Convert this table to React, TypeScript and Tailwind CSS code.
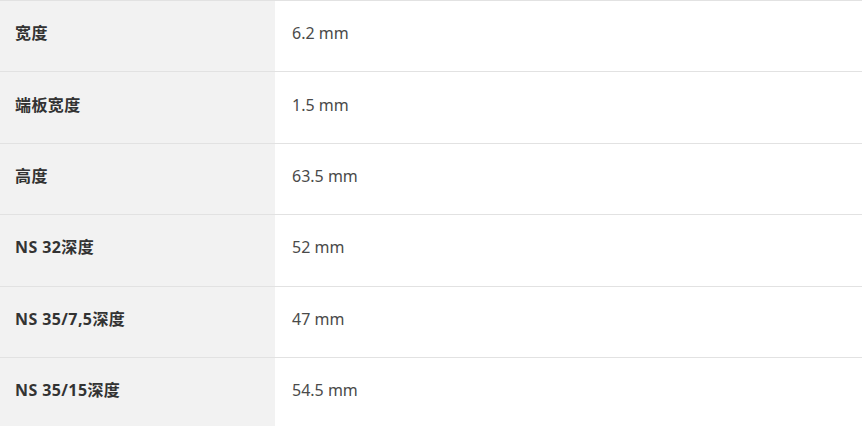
import React from 'react';

const rows = [
  { label: '宽度', value: '6.2 mm' },
  { label: '端板宽度', value: '1.5 mm' },
  { label: '高度', value: '63.5 mm' },
  { label: 'NS 32深度', value: '52 mm' },
  { label: 'NS 35/7,5深度', value: '47 mm' },
  { label: 'NS 35/15深度', value: '54.5 mm' },
];

const App = () => {
  return (
    <div className="w-[862px] h-[426px] overflow-hidden bg-white font-['Noto_Sans','Noto_Sans_CJK_SC',sans-serif] text-[16px]">
      <table className="w-full border-collapse">
        <tbody>
          {rows.map((row) => (
            <tr key={row.label} className="h-[71.4px] border-t border-[#e2e2e2]">
              <th className="w-[275px] bg-[#f2f2f2] pl-[15px] text-left align-middle font-bold text-[#333333] tracking-[0.4px]">
                <span className="relative -top-[3px]">{row.label}</span>
              </th>
              <td className="pl-[17px] align-middle text-[#4a4a4a]">
                <span className="relative -top-[3px]">{row.value}</span>
              </td>
            </tr>
          ))}
        </tbody>
      </table>
    </div>
  );
};

export default App;
